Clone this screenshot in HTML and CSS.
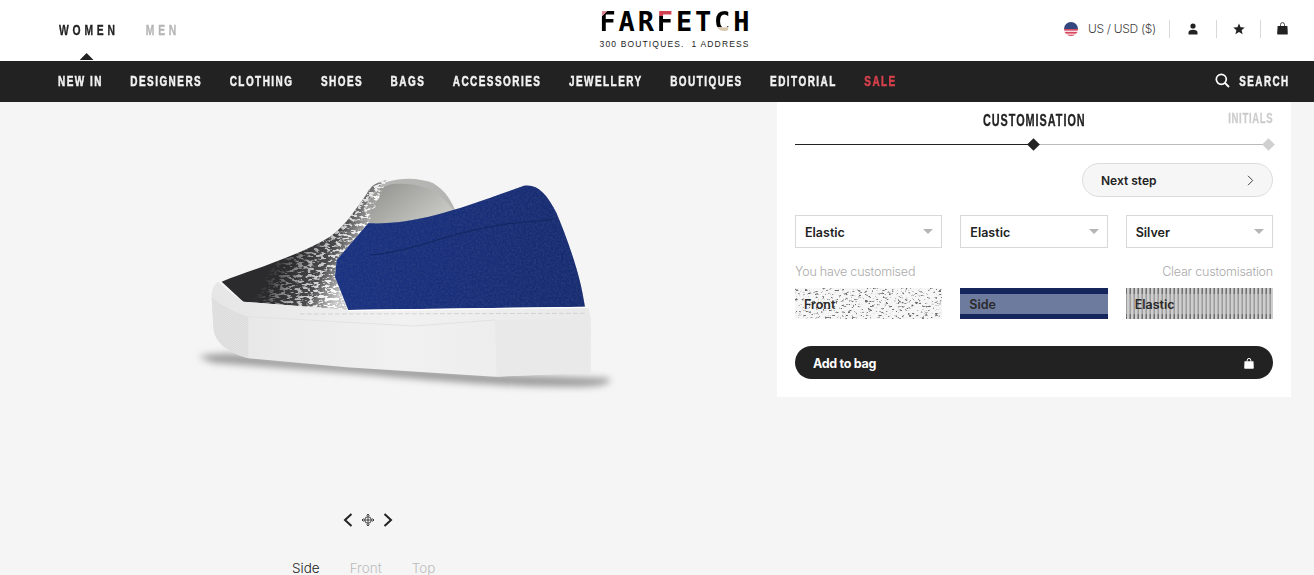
FILE: index.html
```html
<!DOCTYPE html>
<html lang="en">
<head>
    <meta charset="UTF-8">
    <title>Farfetch - Customise</title>
    <link rel="stylesheet" href="styles.css">
</head>
<body>
    <header class="topbar">
        <div class="gender-wrap">
            <div class="gender">
                <a class="gender-link active">WOMEN</a>
                <a class="gender-link">MEN</a>
            </div>
        </div>
        <div class="logo">
            <div class="logo-word"><span class="l-pink">F</span><span>A</span><span>R</span><span class="l-red">F</span><span>E</span><span>T</span><span class="l-sand">C</span><span>H</span></div>
            <div class="logo-sub">300 BOUTIQUES.&nbsp; 1 ADDRESS</div>
        </div>
        <div class="tools">
            <svg class="flag" width="14" height="14" viewBox="0 0 14 14">
                <defs><clipPath id="round"><circle cx="7" cy="7" r="7"/></clipPath></defs>
                <g clip-path="url(#round)">
                    <rect width="14" height="14" fill="#f4dfe2"/>
                    <rect y="7" width="14" height="1.6" fill="#d9485f"/>
                    <rect y="10" width="14" height="1.6" fill="#d9485f"/>
                    <rect y="12.8" width="14" height="1.6" fill="#d9485f"/>
                    <rect width="14" height="7" fill="#34487f"/>
                </g>
            </svg>
            <span class="locale">US / USD ($)</span>
            <span class="tool">
                <svg width="10" height="12" viewBox="0 0 10 12"><circle cx="5" cy="3" r="2.6" fill="#222"/><path d="M.5 11.500V9.600C.5 7.800 2.400 6.800 5 6.800s4.500 1 4.500 2.800v1.900z" fill="#222"/></svg>
            </span>
            <span class="tool tool-star">
                <svg width="12" height="12" viewBox="0 0 12 12"><path d="M6 .4l1.600 3.800 4.100.3-3.100 2.700 1 4L6 9.100 2.400 11.200l1-4L.3 4.500l4.100-.3z" fill="#222"/></svg>
            </span>
            <span class="tool tool-bag">
                <svg width="11" height="13" viewBox="0 0 11 13"><path d="M3.500 4.500V2.600a2 2 0 0 1 4 0v1.900" fill="none" stroke="#222" stroke-width=".8"/><path d="M.6 4h9.800l.4 7.400c0 .8-.5 1.200-1.200 1.200H1.400c-.7 0-1.200-.4-1.200-1.200z" fill="#222"/></svg>
            </span>
        </div>
    </header>

    <nav class="mainnav">
        <div class="nav-links">
            <a>NEW IN</a>
            <a>DESIGNERS</a>
            <a>CLOTHING</a>
            <a>SHOES</a>
            <a>BAGS</a>
            <a>ACCESSORIES</a>
            <a>JEWELLERY</a>
            <a>BOUTIQUES</a>
            <a>EDITORIAL</a>
            <a class="sale">SALE</a>
        </div>
        <a class="search">
            <svg width="15" height="15" viewBox="0 0 15 15"><circle cx="6.300" cy="6.300" r="5" fill="none" stroke="#fff" stroke-width="1.700"/><path d="M10 10l4 4" stroke="#fff" stroke-width="1.800"/></svg>
            <span class="search-text">SEARCH</span>
        </a>
    </nav>

    <main class="page">
        <section class="stage">
            <svg class="shoe" width="440" height="230" viewBox="0 0 1320 690">
                <defs>
                    <filter id="soft" x="-10%" y="-80%" width="120%" height="260%"><feGaussianBlur stdDeviation="11"/></filter>
                    <filter id="suede" x="0" y="0" width="100%" height="100%">
                        <feTurbulence type="fractalNoise" baseFrequency="0.16" numOctaves="4" seed="4"/>
                        <feColorMatrix values="0 0 0 0 0.03  0 0 0 0 0.06  0 0 0 0 0.22  2.4 0 0 0 -0.8"/>
                    </filter>
                    <filter id="foil" x="0" y="0" width="100%" height="100%">
                        <feTurbulence type="fractalNoise" baseFrequency="0.06 0.13" numOctaves="3" seed="8"/>
                        <feColorMatrix values="0 0 0 0 1  0 0 0 0 1  0 0 0 0 1  8 0 0 0 -3.900"/>
                    </filter>
                    <linearGradient id="foilfade" gradientUnits="userSpaceOnUse" x1="300" y1="240" x2="480" y2="340">
                        <stop offset="0" stop-color="#000"/>
                        <stop offset=".5" stop-color="#999"/>
                        <stop offset="1" stop-color="#fff"/>
                    </linearGradient>
                    <linearGradient id="foilbase" gradientUnits="userSpaceOnUse" x1="330" y1="270" x2="490" y2="350">
                        <stop offset="0" stop-color="#2b2b2d"/>
                        <stop offset=".55" stop-color="#4a4a4c"/>
                        <stop offset="1" stop-color="#c8c8c8"/>
                    </linearGradient>
                    <mask id="foilmask"><rect width="1320" height="690" fill="url(#foilfade)"/></mask>
                    <linearGradient id="band" x1="0" y1="0" x2="1" y2="0">
                        <stop offset="0" stop-color="#e6e6e6"/>
                        <stop offset=".5" stop-color="#f1f1f1"/>
                        <stop offset="1" stop-color="#e9e9e9"/>
                    </linearGradient>
                    <linearGradient id="lining" x1="0" y1="0" x2="1" y2=".6">
                        <stop offset="0" stop-color="#8e8e8a"/>
                        <stop offset="1" stop-color="#c9c9c5"/>
                    </linearGradient>
                    <linearGradient id="blue" x1="0" y1="0" x2="1" y2="0">
                        <stop offset="0" stop-color="#1a3284"/>
                        <stop offset="1" stop-color="#172b70"/>
                    </linearGradient>
                    <pattern id="grip" width="5" height="5" patternUnits="userSpaceOnUse" patternTransform="rotate(35)">
                        <rect width="5" height="5" fill="#e4e4e4"/>
                        <rect width="5" height="2" fill="#d8d8d8"/>
                    </pattern>
                    <pattern id="grip-light" width="5" height="5" patternUnits="userSpaceOnUse" patternTransform="rotate(35)">
                        <rect width="5" height="5" fill="#ededed"/>
                        <rect width="5" height="2" fill="#e3e3e3"/>
                    </pattern>
                    <clipPath id="frontclip"><path d="M125 335C210 300 340 265 450 200 500 165 535 105 575 50 585 40 600 35 620 30L565 160 470 270 465 320 505 420 190 395z"/></clipPath>
                    <clipPath id="blueclip"><path d="M565 160C700 165 820 125 1030 48 1070 40 1100 70 1130 130 1150 180 1200 300 1215 412L505 420 465 320 470 270z"/></clipPath>
                </defs>
                <path d="M55 560C120 545 200 552 300 565L950 612 1285 625C1300 635 1280 648 1200 650 1000 655 700 625 500 608L100 578z" fill="#9c9c9c" filter="url(#soft)"/>
                <path d="M565 60C620 25 700 15 760 40 800 65 815 95 828 128L700 170 560 170 545 110z" fill="#b5b5b3"/>
                <path d="M558 120C565 85 590 50 640 42 700 36 760 55 785 80 805 100 815 115 825 125L700 165 570 160z" fill="url(#lining)"/>
                <path d="M125 335C210 300 340 265 450 200 500 165 535 105 575 50 585 40 600 35 620 30 580 60 560 100 552 115L565 160 470 270 465 320 505 420 190 395z" fill="url(#foilbase)"/>
                <g clip-path="url(#frontclip)"><rect width="700" height="450" filter="url(#foil)" mask="url(#foilmask)"/></g>
                <path d="M565 160C700 165 820 125 1030 48 1070 40 1100 70 1130 130 1150 180 1200 300 1215 412L505 420 465 320 470 270z" fill="url(#blue)"/>
                <g clip-path="url(#blueclip)"><rect x="450" y="40" width="780" height="390" filter="url(#suede)" opacity=".55"/></g>
                <path d="M570 255C700 245 800 190 960 165 1020 155 1080 155 1118 148" fill="none" stroke="#12265f" stroke-width="3"/>
                <path d="M1030 48C1070 60 1100 100 1118 148" fill="none" stroke="#152a6b" stroke-width="2" opacity=".6"/>
                <path d="M115 335C100 345 95 360 95 380L100 470C103 510 125 540 205 565L500 592 945 620 1232 608 1232 445 1225 410 505 420 190 395C160 375 135 355 115 335z" fill="url(#band)"/>
                <path d="M95 380L100 470C103 510 130 542 205 565V440C160 425 120 405 95 380z" fill="url(#grip)"/>
                <path d="M945 450L1232 445V608L950 620z" fill="url(#grip-light)"/>
                <path d="M205 440L700 468 945 450" fill="none" stroke="#e2e2e2" stroke-width="3"/>
                <path d="M360 432L1215 430" fill="none" stroke="#c4c4c4" stroke-width="2" stroke-dasharray="14 7"/>
                <path d="M505 422L1225 412" fill="none" stroke="#fff" stroke-width="4"/>
            </svg>
            <div class="rotate">
                <svg width="10" height="14" viewBox="0 0 10 14"><path d="M8.500 1L2 7l6.500 6" fill="none" stroke="#222" stroke-width="2"/></svg>
                <svg width="12" height="12" viewBox="0 0 12 12"><circle cx="6" cy="6" r="3.300" fill="none" stroke="#444"/><path d="M6 0v12M0 6h12M4.500 1.500L6 0l1.500 1.500M4.500 10.500L6 12l1.500-1.500M1.500 4.500L0 6l1.500 1.500M10.500 4.500L12 6l-1.500 1.500" fill="none" stroke="#444"/></svg>
                <svg width="10" height="14" viewBox="0 0 10 14"><path d="M1.500 1L8 7l-6.500 6" fill="none" stroke="#222" stroke-width="2"/></svg>
            </div>
            <div class="views">
                <span class="view on">Side</span>
                <span class="view">Front</span>
                <span class="view">Top</span>
            </div>
        </section>

        <aside class="panel">
            <div class="steps">
                <span class="step-now">CUSTOMISATION</span>
                <span class="step-next">INITIALS</span>
            </div>
            <div class="progress">
                <i class="dot dot-now"></i>
                <i class="dot dot-next"></i>
            </div>
            <div class="next-row">
                <button class="next-btn">Next step
                    <svg width="7" height="11" viewBox="0 0 7 11"><path d="M1 .8l4.700 4.700L1 10.200" fill="none" stroke="#444"/></svg>
                </button>
            </div>
            <div class="three">
                <div class="select">Elastic</div>
                <div class="select">Elastic</div>
                <div class="select">Silver</div>
            </div>
            <div class="note-row">
                <span>You have customised</span>
                <span>Clear customisation</span>
            </div>
            <div class="three">
                <div class="swatch swatch-front">
                    <svg class="swatch-tex" width="100%" height="100%">
                        <filter id="crinkle" x="0" y="0" width="100%" height="100%">
                            <feTurbulence type="fractalNoise" baseFrequency="0.3 0.55" numOctaves="3" seed="3"/>
                            <feColorMatrix values="0 0 0 0 0.15  0 0 0 0 0.15  0 0 0 0 0.15  6 0 0 0 -3.500"/>
                        </filter>
                        <rect width="100%" height="100%" filter="url(#crinkle)"/>
                    </svg>
                    <span>Front</span>
                </div>
                <div class="swatch swatch-side"><span>Side</span></div>
                <div class="swatch swatch-elastic"><span>Elastic</span></div>
            </div>
            <button class="bag-btn">Add to bag
                <svg width="10" height="11" viewBox="0 0 10 11"><path d="M3.200 3.500V2.200a1.800 1.800 0 0 1 3.600 0v1.300" fill="none" stroke="#fff"/><path d="M.5 3.200h9l.3 6.600c0 .6-.4 1-1 1H1.200c-.6 0-1-.4-1-1z" fill="#fff"/></svg>
            </button>
        </aside>
    </main>
</body>
</html>
```

FILE: styles.css
```css
* {
    margin: 0;
    padding: 0;
    box-sizing: border-box;
}

html,
body {
    height: 575px;
    overflow: hidden;
}

body {
    background-color: #f5f5f5;
    font-family: Inter, "Liberation Sans", sans-serif;
    color: #222;
}

.topbar {
    height: 61px;
    background-color: white;
    display: flex;
    align-items: center;
    padding: 0 24px 0 59px;
}

.gender-wrap {
    flex: 1;
    margin-bottom: 2px;
}

/* no condensed face installed, so the display text is squeezed */
.gender {
    display: flex;
    gap: 39px;
    transform: scaleX(0.69);
    transform-origin: left;
    font-family: "Liberation Sans", sans-serif;
    font-size: 15px;
    font-weight: bold;
    letter-spacing: 5.5px;
    color: #b5b5b5;
    -webkit-text-stroke: 0.3px currentColor;
}

.gender-link {
    position: relative;
}

.gender-link.active {
    color: #222;
}

.gender-link.active::after {
    content: "";
    position: absolute;
    left: 30px;
    top: 32px;
    border-style: solid;
    border-color: transparent transparent #222;
    border-width: 0 10px 7px;
}

.logo {
    width: 150px;
    padding-bottom: 2px;
}

.logo-word {
    display: flex;
    justify-content: space-between;
    font-family: "DejaVu Sans Mono", monospace;
    font-size: 27px;
    font-weight: bold;
    line-height: 24px;
    color: #000;
}

.l-pink {
    background: linear-gradient(135deg, #d98a94 22%, #000 22%);
    -webkit-background-clip: text;
    background-clip: text;
    color: transparent;
}

.l-red {
    background: linear-gradient(#d2404f 24%, #000 24%);
    -webkit-background-clip: text;
    background-clip: text;
    color: transparent;
}

.l-sand {
    background: linear-gradient(#000 70%, #d8c6ae 70%);
    -webkit-background-clip: text;
    background-clip: text;
    color: transparent;
}

.logo-sub {
    margin-top: 5px;
    font-family: "Liberation Sans", sans-serif;
    font-size: 8.500px;
    line-height: 10px;
    letter-spacing: 1.150px;
    white-space: nowrap;
    color: #222;
}

.tools {
    flex: 1;
    display: flex;
    justify-content: flex-end;
    align-items: center;
    margin-bottom: 4px;
}

.flag {
    margin-right: 10px;
}

.locale {
    font-size: 12px;
    font-weight: 300;
    letter-spacing: -0.3px;
    color: #444;
    padding-right: 13px;
}

.tool {
    height: 18px;
    border-left: 1px solid #d8d8d8;
    display: flex;
    align-items: center;
    justify-content: center;
    width: 47px;
}

.tool-star {
    width: 44px;
}

.tool-bag {
    width: 30px;
    justify-content: flex-end;
    padding-right: 2px;
}

.mainnav {
    height: 41px;
    background-color: #222;
    display: flex;
    align-items: center;
    justify-content: space-between;
    padding: 0 24px 2px 58px;
    font-family: "Liberation Sans", sans-serif;
    font-size: 15px;
    font-weight: bold;
    letter-spacing: 2.200px;
    color: #f2f2f2;
    -webkit-text-stroke: 0.5px currentColor;
}

/* zero layout width: the scaled row would otherwise push SEARCH off the page */
.nav-links {
    display: flex;
    gap: 41.300px;
    width: 0;
    transform: scaleX(0.665);
    transform-origin: left;
}

.nav-links a {
    flex-shrink: 0;
    white-space: nowrap;
}

.mainnav .sale {
    color: #d8404c;
}

.search {
    display: flex;
    align-items: center;
}

.search-text {
    margin-left: -17px;
    transform: scaleX(0.656);
    transform-origin: right;
}

.page {
    display: flex;
    align-items: flex-start;
}

.stage {
    width: 777px;
    flex-shrink: 0;
}

.shoe {
    display: block;
    margin: 68px 0 0 180px;
}

.rotate {
    display: flex;
    align-items: center;
    gap: 9px;
    margin: 113px 0 0 343px;
}

.views {
    display: flex;
    gap: 30px;
    margin: 32px 0 0 292px;
    font-size: 13.500px;
    font-weight: 300;
    line-height: 18px;
    color: #bdbdbd;
}

.view.on {
    color: #222;
}

.panel {
    width: 514px;
    height: 295px;
    background-color: white;
    padding: 0 18px;
}

.steps {
    position: relative;
    height: 36px;
    text-align: center;
    padding-top: 8px;
}

.step-now,
.step-next {
    font-family: "Liberation Sans", sans-serif;
    font-weight: bold;
    -webkit-text-stroke: 0.3px currentColor;
}

.step-now {
    display: inline-block;
    font-size: 17px;
    letter-spacing: 1.500px;
    transform: scaleX(0.64);
    color: #222;
}

.step-next {
    position: absolute;
    right: 0;
    top: 8px;
    font-size: 14px;
    letter-spacing: 1px;
    transform: scaleX(0.68);
    transform-origin: right;
    color: #ccc;
}

.progress {
    position: relative;
    height: 1px;
    margin-top: 6px;
    background: linear-gradient(to right, #222 50%, #bbb 50%);
}

.dot {
    position: absolute;
    top: -4px;
    width: 9px;
    height: 9px;
    transform: rotate(45deg);
}

.dot-now {
    left: 234px;
    background-color: #222;
}

.dot-next {
    right: 0;
    background-color: #d0d0d0;
}

.next-row {
    display: flex;
    justify-content: flex-end;
    margin-top: 18px;
}

.next-btn {
    width: 191px;
    height: 34px;
    border: 1px solid #ddd;
    border-radius: 17px;
    background-color: #f6f6f6;
    display: flex;
    align-items: center;
    justify-content: space-between;
    padding: 0 18px;
    font-family: Inter, sans-serif;
    font-size: 12px;
    font-weight: 600;
    color: #222;
}

.three {
    display: grid;
    grid-template-columns: repeat(3, 1fr);
    gap: 18px;
}

.next-row + .three {
    margin-top: 18px;
}

.select {
    position: relative;
    height: 33px;
    border: 1px solid #d8d8d8;
    padding-left: 9px;
    font-size: 12.500px;
    font-weight: 600;
    line-height: 33px;
}

.select::after {
    content: "";
    position: absolute;
    right: 8px;
    top: 13px;
    border: 5px solid transparent;
    border-width: 5px 5px 0;
    border-top-color: #b5b5b5;
}

.note-row {
    display: flex;
    justify-content: space-between;
    margin-top: 16px;
    font-size: 12.500px;
    font-weight: 300;
    letter-spacing: -0.2px;
    line-height: 16px;
    color: #aaa;
}

.note-row + .three {
    margin-top: 8px;
}

.swatch {
    position: relative;
    height: 31px;
    padding-top: 6px;
}

.swatch-tex {
    position: absolute;
    left: 0;
    top: 0;
}

.swatch span {
    position: relative;
    display: block;
    height: 20px;
    padding-left: 9px;
    font-size: 12.500px;
    font-weight: 600;
    line-height: 22px;
    color: #2a2a2a;
}

.swatch-front {
    background-color: #f6f6f6;
}

.swatch-side {
    background-color: #14265c;
}

.swatch-side span {
    background-color: #6d7b9f;
}

.swatch-elastic {
    background-color: #aaa;
    background-image: repeating-linear-gradient(to right, #6f6f6f 0 1px, #cfcfcf 1px 3px, #999 3px 4px);
}

.swatch-elastic span {
    background-color: rgba(205, 205, 205, 0.5);
}

.bag-btn {
    width: 100%;
    height: 33px;
    margin-top: 27px;
    border: none;
    border-radius: 17px;
    background-color: #222;
    display: flex;
    align-items: center;
    justify-content: space-between;
    padding: 1px 19px 0 18px;
    font-family: Inter, sans-serif;
    font-size: 12.500px;
    font-weight: 700;
    letter-spacing: -0.3px;
    color: white;
}
```
